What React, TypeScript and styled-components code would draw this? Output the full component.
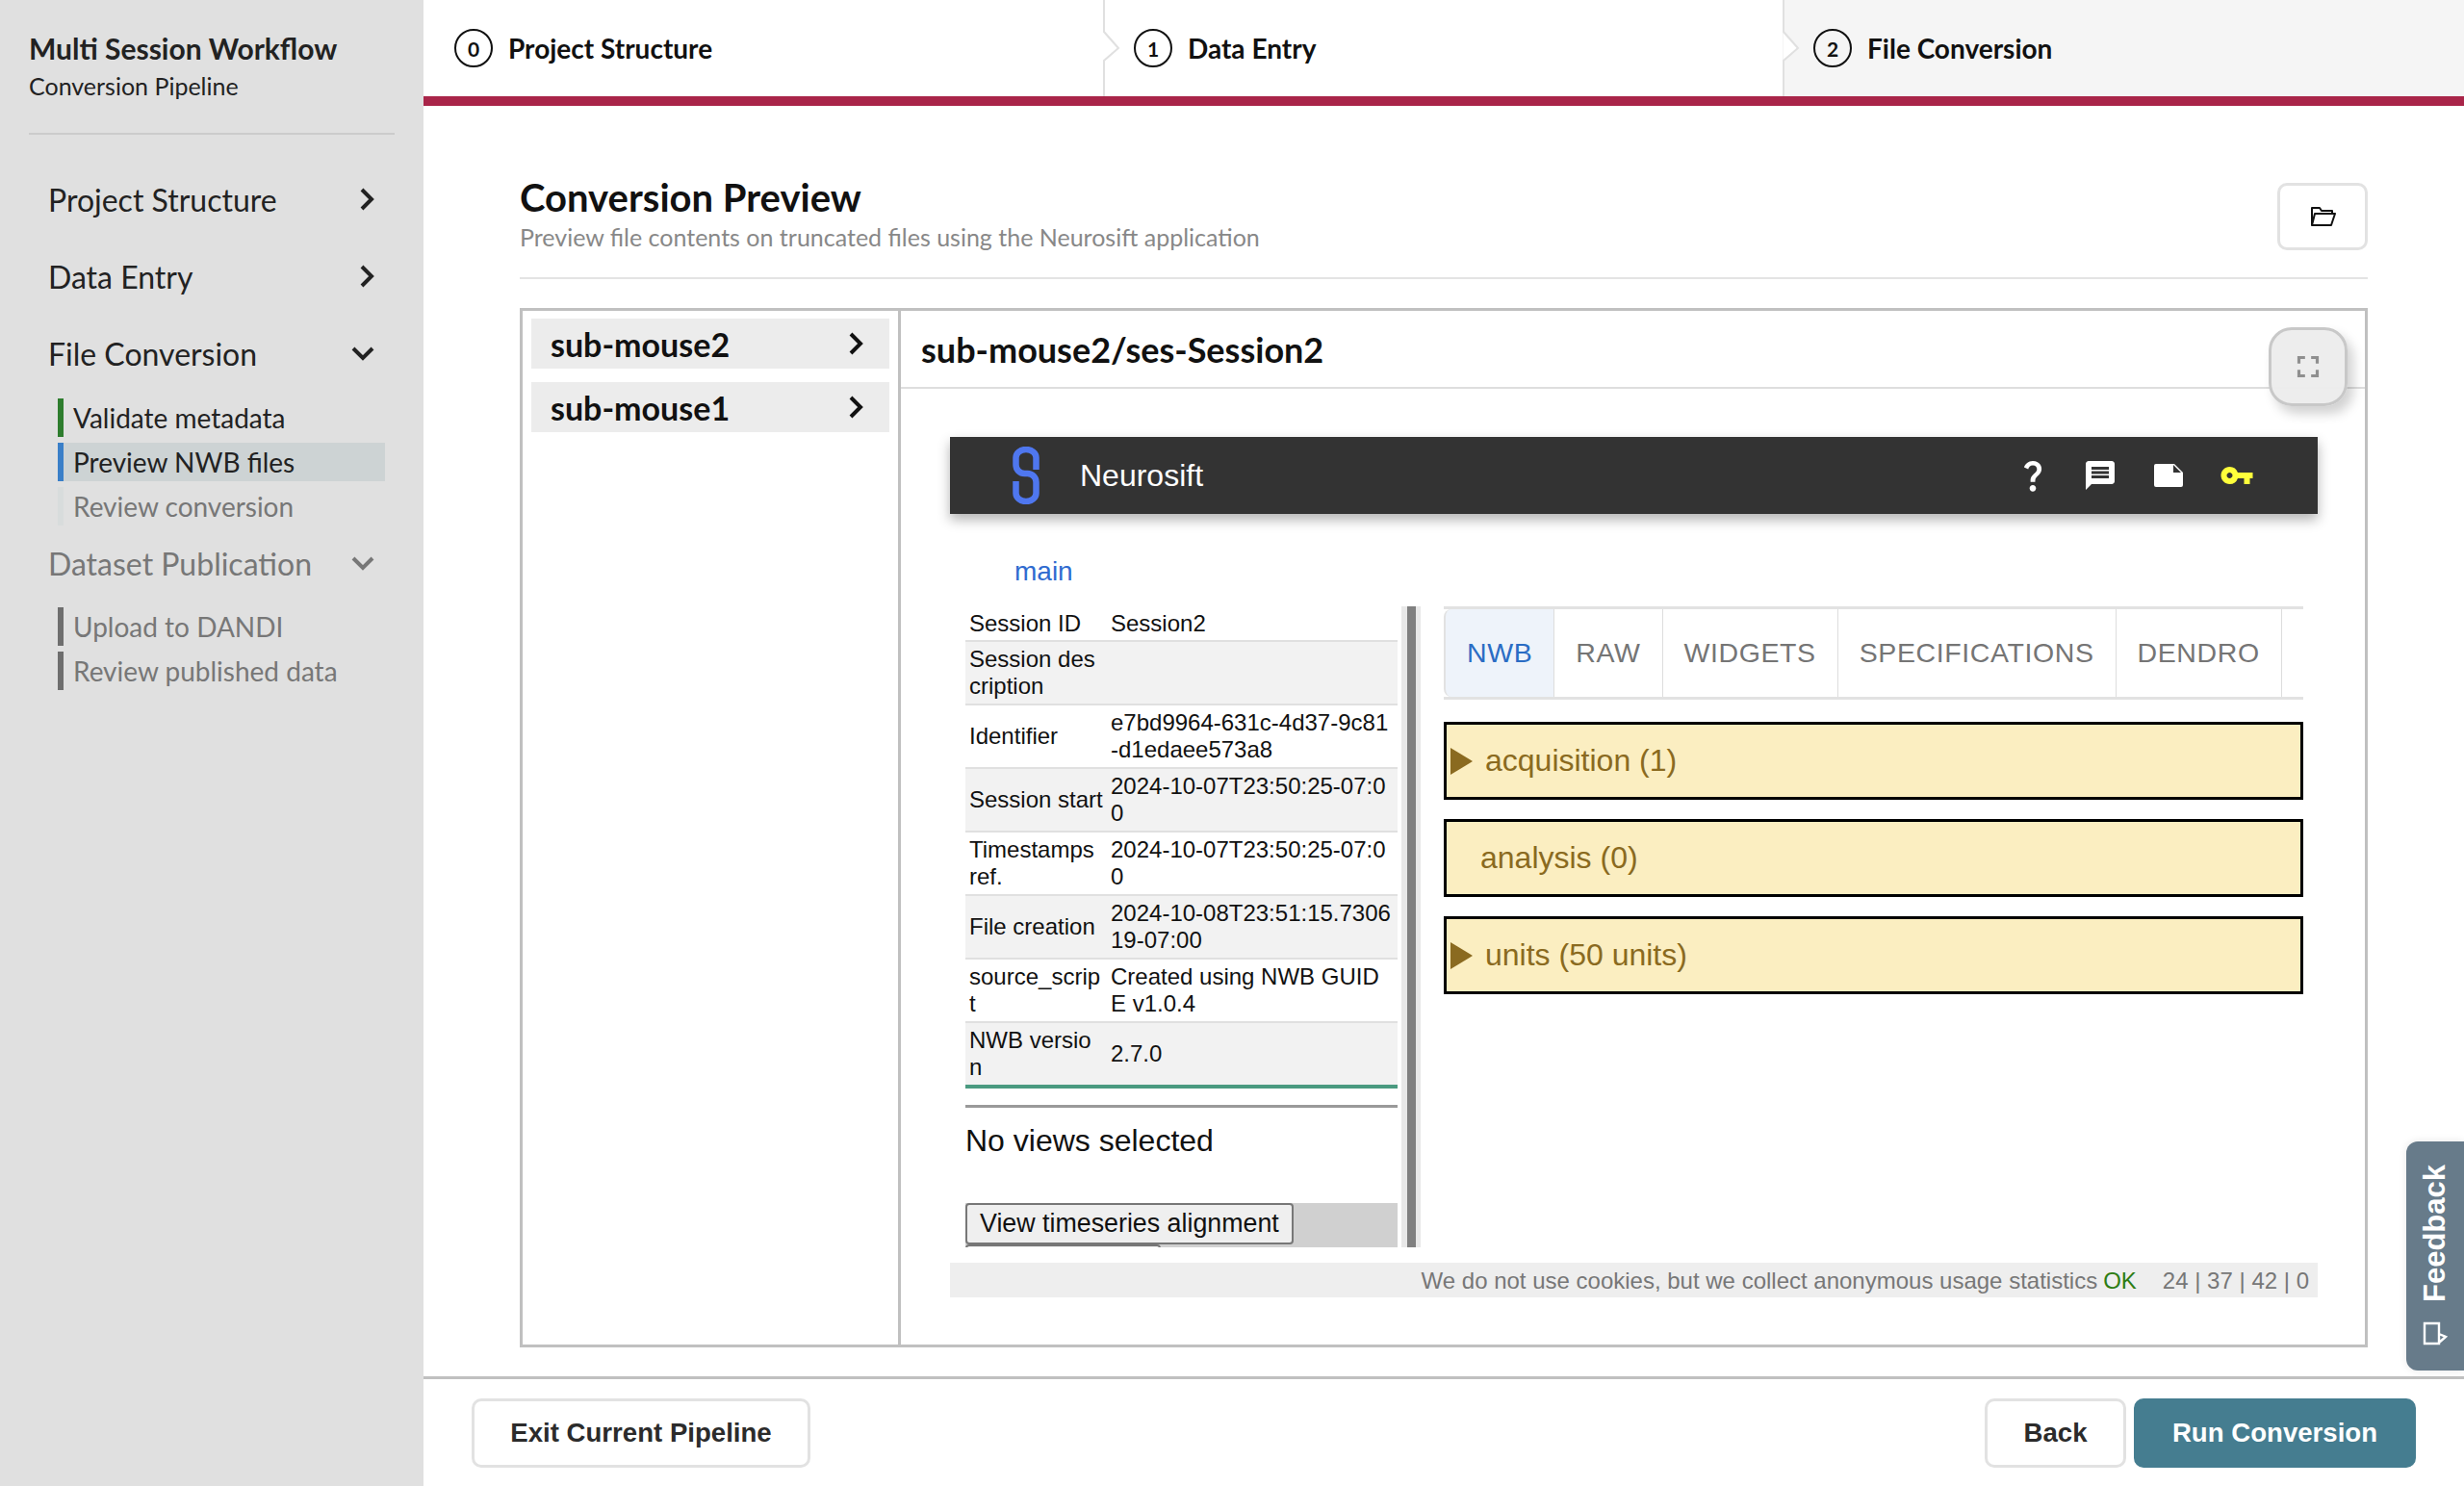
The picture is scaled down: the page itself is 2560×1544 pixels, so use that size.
import React from "react";
import styled, { createGlobalStyle } from "styled-components";
import { MdFullscreen, MdMessage, MdQuestionMark, MdVpnKey } from "react-icons/md";

const GlobalStyle = createGlobalStyle`
	html, body {
		margin: 0;
		padding: 0;
		height: 100%;
		background: #fff;
		font-family: "Lato", "Liberation Sans", sans-serif;
	}
	#root {
		height: 100%;
	}
	* {
		box-sizing: border-box;
	}
`;

const Page = styled.div`
	display: flex;
	height: 1544px;
	width: 2560px;
	overflow: hidden;
	position: relative;
`;

/* ---------- sidebar ---------- */
const Sidebar = styled.aside`
	width: 440px;
	flex-shrink: 0;
	background: #e0e0e0;
	padding: 30px 30px 0;
`;

const SideTitle = styled.h1`
	margin: 0;
	font-size: 30px;
	line-height: 40px;
	font-weight: 700;
	color: #222;
`;

const SideSubtitle = styled.p`
	margin: 0;
	font-size: 25px;
	line-height: 38px;
	color: #222;
`;

const SideDivider = styled.hr`
	border: 0;
	height: 2px;
	background: #cccccc;
	margin: 30px 0 0;
`;

const SideNav = styled.nav`
	display: flex;
	flex-direction: column;
	padding-top: 46px;
`;

const SectionRow = styled.div<{ $muted?: boolean; $gap?: number }>`
	display: flex;
	align-items: center;
	justify-content: space-between;
	height: 42px;
	padding: 0 21px 0 20px;
	margin-bottom: ${(p) => p.$gap ?? 38}px;
	font-size: 32px;
	color: ${(p) => (p.$muted ? "#777" : "#222")};

	svg {
		display: block;
	}
`;

const SubList = styled.div<{ $top?: number; $bottom?: number }>`
	display: flex;
	flex-direction: column;
	gap: 6px;
	margin: ${(p) => p.$top ?? 0}px 0 ${(p) => p.$bottom ?? 0}px 30px;
`;

const SubItem = styled.div<{ $bar: string; $muted?: boolean; $active?: boolean }>`
	height: 40px;
	width: 340px;
	border-left: 6px solid ${(p) => p.$bar};
	padding-left: 10px;
	font-size: 28px;
	line-height: 40px;
	color: ${(p) => (p.$muted ? "#777" : "#222")};
	background: ${(p) => (p.$active ? "#cdd3d4" : "transparent")};
`;

/* ---------- main column ---------- */
const Main = styled.main`
	flex: 1;
	min-width: 0;
	display: flex;
	flex-direction: column;
`;

const StepBar = styled.div`
	display: grid;
	grid-template-columns: 706px 706px 1fr;
	height: 110px;
	border-bottom: 10px solid #a92549;
`;

const Step = styled.div<{ $last?: boolean }>`
	position: relative;
	display: flex;
	align-items: center;
	gap: 16px;
	padding-left: 32px;
	background: ${(p) => (p.$last ? "#f5f5f5" : "#fff")};
	font-size: 28px;
	font-weight: 700;
	color: #111;
`;

const StepNum = styled.span`
	width: 40px;
	height: 40px;
	border-radius: 50%;
	border: 2px solid #111;
	display: flex;
	align-items: center;
	justify-content: center;
	font-size: 21px;
	font-weight: 700;
`;

const StepNotchSvg = styled.svg`
	position: absolute;
	left: 0;
	top: 0;
`;

const Content = styled.div`
	flex: 1;
	min-height: 0;
	display: flex;
	flex-direction: column;
	padding: 71px 100px 30px;
`;

const PageHead = styled.div`
	display: flex;
	justify-content: space-between;
	align-items: flex-start;
	padding-bottom: 27px;
	border-bottom: 2px solid #e4e4e4;
	margin-bottom: 30px;
`;

const PageTitle = styled.h2`
	margin: 0;
	font-size: 40px;
	line-height: 48px;
	font-weight: 700;
	color: #111;
`;

const PageSub = styled.p`
	margin: 2px 0 0;
	font-size: 25px;
	line-height: 30px;
	color: #888;
`;

const FolderButton = styled.button`
	width: 94px;
	height: 70px;
	margin-top: 9px;
	background: #fff;
	border: 3px solid #e2e2e2;
	border-radius: 10px;
	display: flex;
	align-items: center;
	justify-content: center;
	padding: 0;
`;

const Panel = styled.section`
	position: relative;
	flex: 1;
	min-height: 0;
	display: grid;
	grid-template-columns: 393px 1fr;
	border: 3px solid #c0c0c0;
`;

const SessionList = styled.div`
	display: flex;
	flex-direction: column;
	gap: 14px;
	padding: 8px 9px;
	border-right: 3px solid #c0c0c0;
`;

const SessionRow = styled.div`
	height: 52px;
	background: #ececec;
	display: flex;
	align-items: center;
	justify-content: space-between;
	padding: 0 27px 0 20px;
	font-size: 34px;
	font-weight: 700;
	color: #111;
`;

const Preview = styled.div`
	display: flex;
	flex-direction: column;
	min-width: 0;
`;

const PreviewHead = styled.div`
	height: 81px;
	border-bottom: 2px solid #dedede;
	padding-left: 21px;
	display: flex;
	align-items: center;
	font-size: 36px;
	font-weight: 700;
	color: #111;
`;

const FullscreenButton = styled.button`
	position: absolute;
	top: 17px;
	right: 18px;
	width: 82px;
	height: 82px;
	border-radius: 24px;
	border: 3px solid #c8c8c8;
	background: rgba(236, 236, 236, 0.96);
	box-shadow: 6px 8px 12px rgba(0, 0, 0, 0.18);
	display: flex;
	align-items: center;
	justify-content: center;
	padding: 0;
	color: #8f8f8f;
`;

/* ---------- neurosift ---------- */
const Sift = styled.div`
	margin: 50px 49px 0 51px;
	font-family: "Liberation Sans", Arial, sans-serif;
	display: flex;
	flex-direction: column;
`;

const SiftBar = styled.div`
	height: 80px;
	background: #333;
	color: #fff;
	display: flex;
	align-items: center;
	padding: 0 66px 0 65px;
	box-shadow: 0 6px 12px rgba(0, 0, 0, 0.3);
`;

const SiftName = styled.span`
	margin-left: 42px;
	font-size: 32px;
	flex: 1;
`;

const SiftIcons = styled.div`
	display: flex;
	align-items: center;
	gap: 35px;
`;

const HelpIcon = styled(MdQuestionMark)`
	margin-right: -3px;
`;

const MainLink = styled.div`
	margin: 40px 0 16px 67px;
	font-size: 28px;
	line-height: 40px;
	color: #2f6bd0;
`;

const SiftBody = styled.div`
	display: flex;
	height: 666px;
	padding-left: 16px;
	padding-right: 15px;
`;

const InfoPane = styled.div`
	width: 449px;
	flex-shrink: 0;
	display: flex;
	flex-direction: column;
	overflow: hidden;
`;

const InfoRow = styled.div<{ $odd: boolean; $last?: boolean }>`
	display: grid;
	grid-template-columns: 147px 1fr;
	align-items: center;
	min-height: 37px;
	padding: 3px 6px 3px 4px;
	font-size: 24px;
	line-height: 28px;
	color: #111;
	word-break: break-all;
	background: ${(p) => (p.$odd ? "#f2f2f2" : "#fff")};
	border-bottom: ${(p) => (p.$last ? "4px solid #4a9a80" : "2px solid #e0e0e0")};

	&:not(:first-child) {
		padding-top: 4px;
		padding-bottom: 4px;
	}
`;

const InfoKey = styled.span`
	padding-right: 7.7px;
`;

const ViewsRule = styled.div`
	height: 3px;
	background: #999;
	margin-top: 17px;
`;

const NoViews = styled.div`
	margin-top: 14px;
	font-size: 32px;
	line-height: 40px;
	color: #111;
	flex: 1;
`;

const ActionStrip = styled.div`
	height: 46px;
	background: #d0d0d0;
	overflow: hidden;
	display: flex;
	flex-direction: column;
	align-items: flex-start;
`;

const ActionButton = styled.button`
	height: 43px;
	flex-shrink: 0;
	padding: 0 13px;
	background: #efefef;
	border: 2px solid #777;
	border-radius: 4px;
	font-family: inherit;
	font-size: 26.8px;
	color: #111;
`;

const PeekButton = styled.div`
	height: 43px;
	width: 203px;
	flex-shrink: 0;
	background: #efefef;
	border: 2px solid #777;
	border-radius: 4px;
`;

const Gutter = styled.div`
	width: 20px;
	margin-left: 4px;
	flex-shrink: 0;
	background: #e8e8e8;
	display: flex;
	justify-content: center;
`;

const GutterThumb = styled.div`
	width: 9px;
	background: #808080;
`;

const TreePane = styled.div`
	flex: 1;
	min-width: 0;
	margin-left: 24px;
	display: flex;
	flex-direction: column;
`;

const TabRow = styled.div`
	display: flex;
	height: 97px;
	border-top: 3px solid #e2e2e2;
	border-bottom: 3px solid #e2e2e2;
	margin-bottom: 23px;
	overflow: hidden;
`;

const Tab = styled.div<{ $active?: boolean }>`
	display: flex;
	align-items: center;
	padding: 0 22px;
	font-size: 28.5px;
	letter-spacing: 0.6px;
	border-right: 1px solid #dddddd;
	color: ${(p) => (p.$active ? "#2a6cc4" : "#757575")};
	background: ${(p) => (p.$active ? "#eef3fa" : "#fff")};
	border-left: ${(p) => (p.$active ? "2px solid #e2e2e2" : "0")};
	border-radius: ${(p) => (p.$active ? "8px 0 0 8px" : "0")};
`;

const TreeList = styled.div`
	display: flex;
	flex-direction: column;
	gap: 20px;
`;

const TreeItem = styled.div<{ $empty?: boolean }>`
	height: 81px;
	border: 3px solid #000;
	background: #fbeec1;
	display: flex;
	align-items: center;
	gap: 13px;
	padding-left: ${(p) => (p.$empty ? 35 : 4)}px;
	font-size: 32px;
	color: #8a6a20;
`;

const TreeArrow = styled.span`
	width: 0;
	height: 0;
	border-left: 23px solid #8a6a20;
	border-top: 14px solid transparent;
	border-bottom: 14px solid transparent;
`;

const CookieBar = styled.div`
	margin-top: 16px;
	height: 36px;
	background: #eeeeee;
	display: flex;
	justify-content: flex-end;
	align-items: center;
	padding: 2px 9px 0 0;
	font-size: 24px;
	color: #777;
`;

const CookieOk = styled.span`
	color: #2e7d14;
	margin-left: 6px;
	margin-right: 27px;
`;

/* ---------- footer ---------- */
const Footer = styled.footer`
	height: 114px;
	flex-shrink: 0;
	border-top: 3px solid #c0c0c0;
	display: flex;
	align-items: center;
	padding: 0 50px;
	gap: 8px;
	font-family: "Liberation Sans", Arial, sans-serif;
`;

const FootButton = styled.button<{ $primary?: boolean; $wide?: number }>`
	height: 72px;
	width: ${(p) => p.$wide}px;
	border-radius: 10px;
	border: 3px solid ${(p) => (p.$primary ? "#457d90" : "#e2e2e2")};
	background: ${(p) => (p.$primary ? "#457d90" : "#fff")};
	color: ${(p) => (p.$primary ? "#fff" : "#2b2b2b")};
	font-family: inherit;
	font-size: 27.6px;
	font-weight: 700;
	padding: 0;
`;

const FootSpacer = styled.div`
	flex: 1;
`;

const FeedbackTab = styled.div`
	position: absolute;
	right: 0;
	top: 1186px;
	width: 60px;
	height: 238px;
	background: #677b8a;
	border-radius: 12px 0 0 12px;
	box-shadow: 0 0 8px rgba(0, 0, 0, 0.1);
	display: flex;
	flex-direction: column;
	align-items: center;
	justify-content: space-between;
	padding: 24px 0 26px;
	color: #fff;
	font-family: "Liberation Sans", Arial, sans-serif;
`;

const FeedbackLabel = styled.span`
	writing-mode: vertical-rl;
	transform: rotate(180deg);
	font-size: 31px;
	font-weight: 700;
	line-height: 32px;
`;

function Chevron({ dir, color = "#222" }: { dir: "right" | "down"; color?: string }) {
	const d = dir === "right" ? "M3 2 L13 12 L3 22" : "M2 3 L12 13 L22 3";
	const box = dir === "right" ? "0 0 16 24" : "0 0 24 16";
	return (
		<svg width={dir === "right" ? 16 : 24} height={dir === "right" ? 24 : 16} viewBox={box}>
			<path d={d} fill="none" stroke={color} strokeWidth="4" />
		</svg>
	);
}

function StepNotch() {
	return (
		<StepNotchSvg width="20" height="100" viewBox="0 0 20 100">
			<path d="M1 0 V33 L16 50 L1 63 V100" fill="#fff" stroke="#e0e0e0" strokeWidth="2" />
		</StepNotchSvg>
	);
}

function SiftLogo() {
	return (
		<svg width="28" height="60" viewBox="0 0 28 60">
			<path
				d="M24.5 24 V11.5 A10.5 8.5 0 0 0 3.5 11.5 V19 A9 9 0 0 0 12.5 28 H15.5 A9 9 0 0 1 24.5 37 V48.5 A10.5 8.5 0 0 1 3.5 48.5 V36"
				fill="none"
				stroke="#4f77ef"
				strokeWidth="6.5"
			/>
		</svg>
	);
}

function SiftFileIcon() {
	return (
		<svg width="36" height="28" viewBox="0 0 36 28">
			<path
				d="M5 2 H24 L33 11 V24 A2 2 0 0 1 31 26 H5 A2 2 0 0 1 3 24 V4 A2 2 0 0 1 5 2 Z"
				fill="#fff"
			/>
			<path d="M23 3 L31 11 H23 Z" fill="#333" />
		</svg>
	);
}

const infoRows = [
	["Session ID", "Session2"],
	["Session description", ""],
	["Identifier", "e7bd9964-631c-4d37-9c81-d1edaee573a8"],
	["Session start", "2024-10-07T23:50:25-07:00"],
	["Timestamps ref.", "2024-10-07T23:50:25-07:00"],
	["File creation", "2024-10-08T23:51:15.730619-07:00"],
	["source_script", "Created using NWB GUIDE v1.0.4"],
	["NWB version", "2.7.0"],
];

export default function App() {
	return (
		<Page>
			<GlobalStyle />
			<Sidebar>
				<SideTitle>Multi Session Workflow</SideTitle>
				<SideSubtitle>Conversion Pipeline</SideSubtitle>
				<SideDivider />
				<SideNav>
					<SectionRow>
						Project Structure <Chevron dir="right" />
					</SectionRow>
					<SectionRow>
						Data Entry <Chevron dir="right" />
					</SectionRow>
					<SectionRow $gap={26}>
						File Conversion <Chevron dir="down" />
					</SectionRow>
					<SubList $bottom={18}>
						<SubItem $bar="#2e7d2e">Validate metadata</SubItem>
						<SubItem $bar="#3a7fc8" $active>
							Preview NWB files
						</SubItem>
						<SubItem $bar="#d8dcdc" $muted>
							Review conversion
						</SubItem>
					</SubList>
					<SectionRow $muted $gap={25}>
						Dataset Publication <Chevron dir="down" color="#777" />
					</SectionRow>
					<SubList>
						<SubItem $bar="#6e6e6e" $muted>
							Upload to DANDI
						</SubItem>
						<SubItem $bar="#6e6e6e" $muted>
							Review published data
						</SubItem>
					</SubList>
				</SideNav>
			</Sidebar>

			<Main>
				<StepBar>
					<Step>
						<StepNum>0</StepNum>
						Project Structure
					</Step>
					<Step>
						<StepNotch />
						<StepNum>1</StepNum>
						Data Entry
					</Step>
					<Step $last>
						<StepNotch />
						<StepNum>2</StepNum>
						File Conversion
					</Step>
				</StepBar>

				<Content>
					<PageHead>
						<div>
							<PageTitle>Conversion Preview</PageTitle>
							<PageSub>Preview file contents on truncated files using the Neurosift application</PageSub>
						</div>
						<FolderButton aria-label="Open folder">
							<svg width="28" height="22" viewBox="0 0 28 22">
								<path
									d="M3 20 H23 L27 8 H6 L3 20 V2 H11 L13 5 H24 V8"
									fill="none"
									stroke="#111"
									strokeWidth="2"
									strokeLinejoin="round"
								/>
							</svg>
						</FolderButton>
					</PageHead>

					<Panel>
						<SessionList>
							<SessionRow>
								sub-mouse2 <Chevron dir="right" color="#111" />
							</SessionRow>
							<SessionRow>
								sub-mouse1 <Chevron dir="right" color="#111" />
							</SessionRow>
						</SessionList>
						<Preview>
							<PreviewHead>sub-mouse2/ses-Session2</PreviewHead>
							<Sift>
								<SiftBar>
									<SiftLogo />
									<SiftName>Neurosift</SiftName>
									<SiftIcons>
										<HelpIcon size={40} />
										<MdMessage size={36} />
										<SiftFileIcon />
										<MdVpnKey size={36} color="#ffff3b" />
									</SiftIcons>
								</SiftBar>
								<MainLink>main</MainLink>
								<SiftBody>
									<InfoPane>
										{infoRows.map(([k, v], i) => (
											<InfoRow key={k} $odd={i % 2 === 1} $last={i === infoRows.length - 1}>
												<InfoKey>{k}</InfoKey>
												<span>{v}</span>
											</InfoRow>
										))}
										<ViewsRule />
										<NoViews>No views selected</NoViews>
										<ActionStrip>
											<ActionButton>View timeseries alignment</ActionButton>
											<PeekButton />
										</ActionStrip>
									</InfoPane>
									<Gutter>
										<GutterThumb />
									</Gutter>
									<TreePane>
										<TabRow>
											<Tab $active>NWB</Tab>
											<Tab>RAW</Tab>
											<Tab>WIDGETS</Tab>
											<Tab>SPECIFICATIONS</Tab>
											<Tab>DENDRO</Tab>
										</TabRow>
										<TreeList>
											<TreeItem>
												<TreeArrow />
												acquisition (1)
											</TreeItem>
											<TreeItem $empty>analysis (0)</TreeItem>
											<TreeItem>
												<TreeArrow />
												units (50 units)
											</TreeItem>
										</TreeList>
									</TreePane>
								</SiftBody>
								<CookieBar>
									We do not use cookies, but we collect anonymous usage statistics
									<CookieOk>OK</CookieOk>
									24 | 37 | 42 | 0
								</CookieBar>
							</Sift>
						</Preview>
						<FullscreenButton aria-label="Fullscreen">
							<MdFullscreen size={38} />
						</FullscreenButton>
					</Panel>
				</Content>

				<Footer>
					<FootButton $wide={352}>Exit Current Pipeline</FootButton>
					<FootSpacer />
					<FootButton $wide={147}>Back</FootButton>
					<FootButton $wide={293} $primary>
						Run Conversion
					</FootButton>
				</Footer>
			</Main>

			<FeedbackTab>
				<FeedbackLabel>Feedback</FeedbackLabel>
				<svg width="26" height="26" viewBox="0 0 26 26">
					<path d="M2 3 H17 V24 H2 Z M17 14 L24 17 L17 23" fill="none" stroke="#fff" strokeWidth="2.4" />
				</svg>
			</FeedbackTab>
		</Page>
	);
}
